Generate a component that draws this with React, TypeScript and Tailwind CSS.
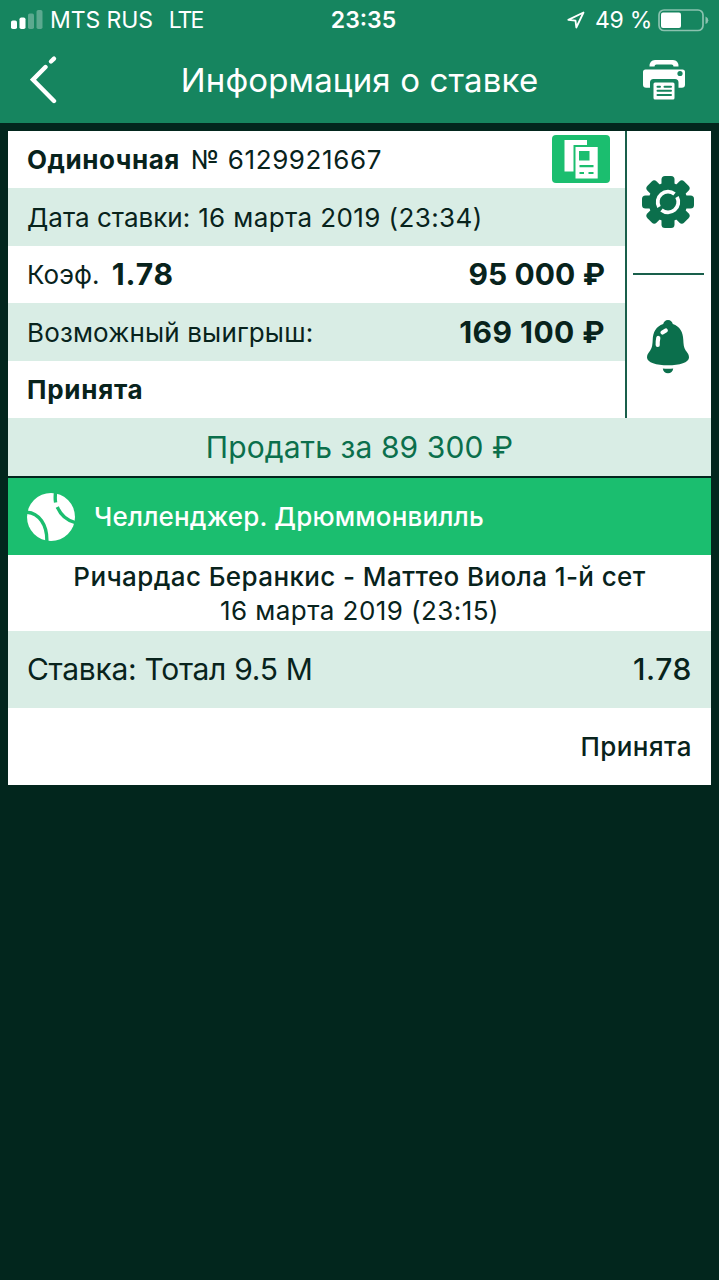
import type { ReactNode } from "react";
import clsx from "clsx";

const BET = {
  kind: "Одиночная",
  number: "№ 6129921667",
  date: "16 марта 2019 (23:34)",
  odds: "1.78",
  stake: "95 000 ₽",
  payout: "169 100 ₽",
  status: "Принята",
  cashout: "Продать за 89 300 ₽",
};

const EVENT = {
  league: "Челленджер. Дрюммонвилль",
  match: "Ричардас Беранкис - Маттео Виола 1-й сет",
  start: "16 марта 2019 (23:15)",
  pick: "Ставка: Тотал 9.5 М",
  odds: "1.78",
  status: "Принята",
};

function SignalIcon() {
  return (
    <svg width="32" height="20" viewBox="0 0 32 20" fill="#fff" aria-hidden="true">
      <rect x="0" y="10.5" width="6" height="8.5" rx="1.8" />
      <rect x="8.5" y="7.5" width="6" height="11.5" rx="1.8" />
      <rect x="17" y="3.5" width="6" height="15.5" rx="1.8" opacity=".3" />
      <rect x="25.5" y="0" width="6" height="19" rx="1.8" opacity=".3" />
    </svg>
  );
}

function LocationIcon() {
  return (
    <svg width="18" height="18" viewBox="0 0 18 18" fill="none" stroke="#fff" strokeWidth="1.8" strokeLinejoin="round" aria-hidden="true">
      <path d="M16.5 1.5 1.3 8.900l7.200.8.8 6.800z" />
    </svg>
  );
}

function BatteryIcon() {
  return (
    <svg width="51" height="23" viewBox="0 0 51 23" aria-hidden="true">
      <rect x="1" y="1" width="44" height="20.5" rx="5" fill="none" stroke="#fff" strokeOpacity=".5" strokeWidth="1.7" />
      <rect x="3" y="3.5" width="20" height="15.5" rx="2" fill="#fff" />
      <path d="M47.5 7.5q2.8 1.2 2.8 3.8t-2.8 3.8z" fill="#fff" fillOpacity=".5" />
    </svg>
  );
}

function BackIcon() {
  return (
    <svg width="28" height="50" viewBox="0 0 28 50" fill="none" stroke="#fff" strokeWidth="4.4" strokeLinecap="round" strokeLinejoin="miter" aria-hidden="true">
      <path d="M15.5 12 3 24.7 24 46" />
      <path d="M21 6.5 24 3.7" />
    </svg>
  );
}

function PrinterIcon() {
  return (
    <svg width="42" height="40" viewBox="0 0 42 40" aria-hidden="true">
      <path d="M6.5 6.5Q6.5 0 12 0h18q5.5 0 5.5 6.5h-5q0-2-2-2h-15q-2 0-2 2z" fill="#fff" />
      <path d="M2.5 9.5h37Q42 9.5 42 12v12.500q0 3.200-3.200 3.200H35.500V22.500q0-3.500-3.500-3.500H10.500Q7 19 7 22.500v5.200H3.200Q0 27.700 0 24.500V12q0-2.500 2.500-2.500z" fill="#fff" />
      <circle cx="37" cy="13.5" r="2.6" fill="#16855f" />
      <rect x="10.5" y="22.5" width="21" height="17" rx="1.5" fill="#fff" />
      <path d="M14.5 26.8h2.5M21.5 26.8H28M14.5 30.8h13.5M14.5 35h13.5" stroke="#16855f" strokeWidth="2" strokeLinecap="round" />
    </svg>
  );
}

function CouponIcon() {
  return (
    <svg width="58" height="48" viewBox="0 0 58 48" aria-hidden="true">
      <rect width="58" height="48" rx="4" fill="#1bbe6f" />
      <path d="M12.5 5H35v5H21.500v26.500h-9z" fill="#fff" />
      <rect x="23.5" y="12" width="22.2" height="31.5" fill="#fff" />
      <path d="M27 16h10.500v9.500H27z" fill="#1bbe6f" />
      <path d="M27.5 31.2h14M27.5 38h4.500M36.500 38h5" stroke="#1bbe6f" strokeWidth="2.2" />
    </svg>
  );
}

function GearIcon() {
  return (
    <svg width="52" height="52" viewBox="-26 -26 52 52" aria-hidden="true">
      <g fill="#0b6f4c">
        <circle r="19.5" />
        <rect x="-6.5" y="-26" width="13" height="52" rx="3.5" />
        <rect x="-6.5" y="-26" width="13" height="52" rx="3.5" transform="rotate(45)" />
        <rect x="-6.5" y="-26" width="13" height="52" rx="3.5" transform="rotate(90)" />
        <rect x="-6.5" y="-26" width="13" height="52" rx="3.5" transform="rotate(135)" />
      </g>
      <g fill="none" stroke="#fff" strokeWidth="3.8">
        <path d="M-9 5A10.300 10.300 0 0 1 6.500-8" />
        <path d="M9-5A10.300 10.300 0 0 1-6.500 8" />
      </g>
    </svg>
  );
}

function BellIcon() {
  return (
    <svg width="42" height="54" viewBox="0 0 42 54" aria-hidden="true">
      <path
        d="M21 0c2.600 0 4.300 1.700 4.800 4C33 6.500 36 12 36.300 20c.3 6.500 1 8.500 3.200 11.500C41 33.500 42 35 42 37.500 42 42.500 32.500 45.300 21 45.300S0 42.500 0 37.500c0-2.500 1-4 2.500-6C4.700 28.500 5.400 26.500 5.700 20 6 12 9 6.500 16.200 4 16.700 1.700 18.400 0 21 0z"
        fill="#0b6f4c"
      />
      <path d="M15.8 48.5c3.400.4 7 .4 10.400 0-.3 3-2.400 4.800-5.200 4.800s-4.900-1.800-5.200-4.800z" fill="#0b6f4c" />
      <path d="M11.3 18Q10.500 21.500 10.700 25" stroke="#fff" strokeWidth="4.2" strokeLinecap="round" fill="none" />
      <path d="M15.5 12.5 18.800 10.500" stroke="#fff" strokeWidth="4.2" strokeLinecap="round" />
    </svg>
  );
}

function TennisIcon() {
  return (
    <svg width="48" height="48" viewBox="0 0 48 48" aria-hidden="true">
      <circle cx="24" cy="24" r="24" fill="#fff" />
      <g fill="none" stroke="#1bbe6f" strokeWidth="3.4">
        <path d="M-1 19.2C12 19.500 20.500 32 19.800 49" />
        <path d="M28.6-1Q27.800 5 28.600 9.500" />
        <path d="M30.3 14Q35.500 26.500 49 29.800" />
      </g>
    </svg>
  );
}

function Row({ tinted, children }: { tinted?: boolean; children: ReactNode }) {
  return (
    <div
      className={clsx(
        "flex h-[57.5px] items-center whitespace-nowrap pl-[19px] pr-5 text-[26px]",
        tinted && "bg-[#d9ede5]",
      )}
    >
      {children}
    </div>
  );
}

function Header() {
  return (
    <header className="h-[123px] bg-[#16855f] text-white">
      <div className="grid h-10 grid-cols-[1fr_auto_1fr] items-center pl-[11px] pr-2.5 text-[23px]">
        <div className="flex items-center">
          <SignalIcon />
          <span className="ml-[7px] tracking-[-0.1px]">MTS RUS</span>
          <span className="ml-4 tracking-[-2px]">LTE</span>
        </div>
        <span className="ml-[7px] font-semibold">23:35</span>
        <div className="flex items-center justify-end">
          <LocationIcon />
          <span className="ml-2.5 mr-[6px] tracking-[-0.3px]">49 %</span>
          <BatteryIcon />
        </div>
      </div>
      <div className="grid h-20 grid-cols-[1fr_auto_1fr] items-center pl-[30px] pr-[34px]">
        <button type="button" aria-label="Назад" className="w-7">
          <BackIcon />
        </button>
        <h1 className="ml-1 pt-px text-[33px] tracking-[0.15px]">Информация о ставке</h1>
        <button type="button" aria-label="Печать" className="justify-self-end">
          <PrinterIcon />
        </button>
      </div>
    </header>
  );
}

function BetSummary() {
  return (
    <section>
      <div className="flex bg-white">
        <div className="w-[617px]">
          <Row>
            <span className="font-bold tracking-[0.55px]">{BET.kind}</span>
            <span className="ml-[11px] tracking-[0.6px]">{BET.number}</span>
            <button type="button" aria-label="Купон" className="-mr-[5px] ml-auto">
              <CouponIcon />
            </button>
          </Row>
          <Row tinted>
            <span className="pt-px">Дата ставки:</span>
            <span className="ml-2 pt-px tracking-[0.4px]">{BET.date}</span>
          </Row>
          <Row>
            <span className="tracking-[0.1px]">Коэф.</span>
            <span className="ml-3 text-[30px] font-bold tracking-[0.9px]">{BET.odds}</span>
            <span className="ml-auto text-[30px] font-bold tracking-[0.1px]">{BET.stake}</span>
          </Row>
          <Row tinted>
            <span className="pt-px tracking-[0.15px]">Возможный выигрыш:</span>
            <span className="ml-auto pt-px text-[30px] font-bold tracking-[0.45px]">{BET.payout}</span>
          </Row>
          <Row>
            <span className="font-bold tracking-[0.75px]">{BET.status}</span>
          </Row>
        </div>
        <div className="flex flex-1 flex-col items-center border-l-2 border-[#195f4b] pr-0.5">
          <button type="button" aria-label="Настройки" className="flex flex-1 items-center pt-px">
            <GearIcon />
          </button>
          <div className="h-0.5 w-[71px] bg-[#195f4b]" />
          <button type="button" aria-label="Уведомления" className="flex flex-1 items-center pt-px">
            <BellIcon />
          </button>
        </div>
      </div>
      <button
        type="button"
        className="flex h-[58px] w-full items-center justify-center bg-[#d9ede5] text-[30px] tracking-[0.1px] text-[#0b6f4c]"
      >
        {BET.cashout}
      </button>
    </section>
  );
}

function EventCard() {
  return (
    <section className="mt-0.5 bg-white">
      <div className="flex h-[77px] items-center bg-[#1bbe6f] pl-[19px] text-[26px] font-medium text-white">
        <TennisIcon />
        <span className="ml-[19px] tracking-[0.16px]">{EVENT.league}</span>
      </div>
      <div className="flex h-[76px] flex-col items-center pt-[5px] text-[26px] leading-[34px]">
        <span className="font-medium tracking-[0.4px]">{EVENT.match}</span>
        <span className="tracking-[0.45px]">{EVENT.start}</span>
      </div>
      <div className="flex h-[77px] items-center justify-between bg-[#d9ede5] px-[19px] text-[30px]">
        <span className="tracking-[-0.3px]">{EVENT.pick}</span>
        <span className="font-medium tracking-[0.6px]">{EVENT.odds}</span>
      </div>
      <div className="flex h-[77px] items-center justify-end px-[19px] text-[26px] font-medium tracking-[0.45px]">
        {EVENT.status}
      </div>
    </section>
  );
}

export default function App() {
  return (
    <div className="min-h-screen bg-[#02261d] font-[Inter,sans-serif] text-[#08231c]">
      <Header />
      <main className="px-2 pt-[7.5px]">
        <BetSummary />
        <EventCard />
      </main>
    </div>
  );
}
